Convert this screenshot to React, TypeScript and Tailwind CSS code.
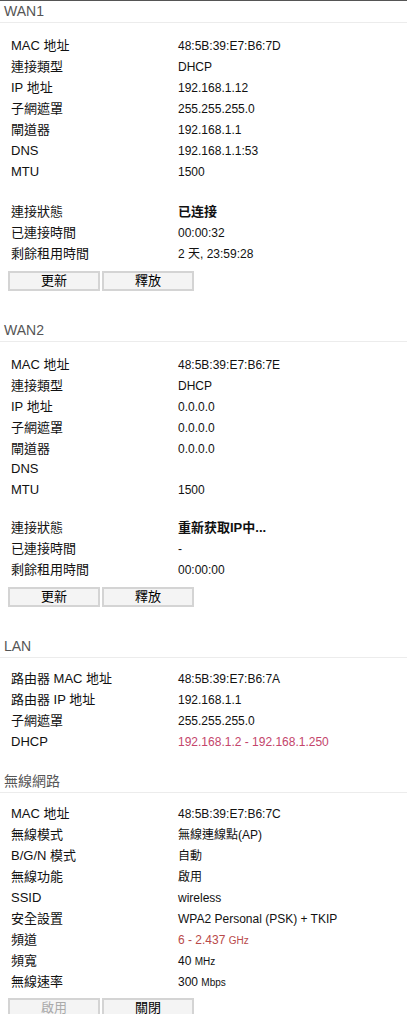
import React from 'react';

type Row = {
  label: string;
  value?: React.ReactNode;
  h?: string;
};

const font = { fontFamily: '"Liberation Sans", Arial, "Noto Sans CJK TC", sans-serif' };

function Heading({ title, mt = '' }: { title: string; mt?: string }) {
  return (
    <div className={`h-[22px] pl-[4px] pt-[2px] border-b border-[#ececec] text-[14px] leading-[17px] text-[#555] ${mt}`}>
      {title}
    </div>
  );
}

function InfoRows({ rows }: { rows: Row[] }) {
  return (
    <div className="pl-[11px] text-[12px] text-[#111]">
      {rows.map((r, i) =>
        r.label === '' ? (
          <div key={i} className={r.h ?? 'h-[19px]'} />
        ) : (
          <div key={i} className={`flex items-center ${r.h ?? 'h-[21px]'}`}>
            <div className="w-[167px] shrink-0 text-[13px]">{r.label}</div>
            <div>{r.value}</div>
          </div>
        )
      )}
    </div>
  );
}

function Buttons({ left, right, leftDisabled, mt = 'mt-[7px]' }: { left: string; right: string; leftDisabled?: boolean; mt?: string }) {
  const cls = 'w-[92px] h-[20px] border-2 border-[#d4d4d4] bg-[#f4f4f4] text-[13px] leading-[16px] text-center';
  return (
    <div className={`flex gap-[2px] pl-[8px] ${mt}`}>
      <div className={`${cls} ${leftDisabled ? 'text-[#aaa]' : 'text-black'}`}>{left}</div>
      <div className={`${cls} text-black`}>{right}</div>
    </div>
  );
}

const Unit = ({ children }: { children: React.ReactNode }) => <span className="text-[10px]">{children}</span>;

export default function App() {
  const wan1: Row[] = [
    { label: 'MAC 地址', value: '48:5B:39:E7:B6:7D' },
    { label: '連接類型', value: 'DHCP' },
    { label: 'IP 地址', value: '192.168.1.12' },
    { label: '子網遮罩', value: '255.255.255.0' },
    { label: '閘道器', value: '192.168.1.1' },
    { label: 'DNS', value: '192.168.1.1:53' },
    { label: 'MTU', value: '1500' },
    { label: '' },
    { label: '連接狀態', value: <span className="font-bold text-[13px]">已连接</span> },
    { label: '已連接時間', value: '00:00:32' },
    { label: '剩餘租用時間', value: '2 天, 23:59:28' },
  ];

  const wan2: Row[] = [
    { label: 'MAC 地址', value: '48:5B:39:E7:B6:7E' },
    { label: '連接類型', value: 'DHCP' },
    { label: 'IP 地址', value: '0.0.0.0' },
    { label: '子網遮罩', value: '0.0.0.0' },
    { label: '閘道器', value: '0.0.0.0' },
    { label: 'DNS', value: '', h: 'h-[20px]' },
    { label: 'MTU', value: '1500' },
    { label: '', h: 'h-[17px]' },
    { label: '連接狀態', value: <span className="font-bold text-[13px]">重新获取IP中...</span> },
    { label: '已連接時間', value: '-' },
    { label: '剩餘租用時間', value: '00:00:00' },
  ];

  const lan: Row[] = [
    { label: '路由器 MAC 地址', value: '48:5B:39:E7:B6:7A' },
    { label: '路由器 IP 地址', value: '192.168.1.1' },
    { label: '子網遮罩', value: '255.255.255.0' },
    { label: 'DHCP', value: <span className="text-[#c4456b]">192.168.1.2 - 192.168.1.250</span> },
  ];

  const wireless: Row[] = [
    { label: 'MAC 地址', value: '48:5B:39:E7:B6:7C' },
    { label: '無線模式', value: '無線連線點(AP)' },
    { label: 'B/G/N 模式', value: '自動' },
    { label: '無線功能', value: '啟用' },
    { label: 'SSID', value: 'wireless' },
    { label: '安全設置', value: 'WPA2 Personal (PSK) + TKIP' },
    {
      label: '頻道',
      value: (
        <span className="text-[#b94a4a]">
          6 - 2.437 <Unit>GHz</Unit>
        </span>
      ),
    },
    { label: '頻寬', value: <>40 <Unit>MHz</Unit></> },
    { label: '無線速率', value: <>300 <Unit>Mbps</Unit></> },
  ];

  return (
    <div className="min-h-[1014px] bg-white border-t border-[#555]" style={font}>
      {/* WAN1 */}
      <Heading title="WAN1" />
      <div className="mt-[12px]">
        <InfoRows rows={wan1} />
      </div>
      <Buttons left="更新" right="釋放" />

      {/* WAN2 */}
      <Heading title="WAN2" mt="mt-[29px]" />
      <div className="mt-[12px]">
        <InfoRows rows={wan2} />
      </div>
      <Buttons left="更新" right="釋放" />

      {/* LAN */}
      <Heading title="LAN" mt="mt-[29px]" />
      <div className="mt-[10px]">
        <InfoRows rows={lan} />
      </div>

      {/* Wireless */}
      <Heading title="無線網路" mt="mt-[19px]" />
      <div className="mt-[10px]">
        <InfoRows rows={wireless} />
      </div>
      <Buttons left="啟用" right="關閉" leftDisabled mt="mt-[6px]" />
    </div>
  );
}
